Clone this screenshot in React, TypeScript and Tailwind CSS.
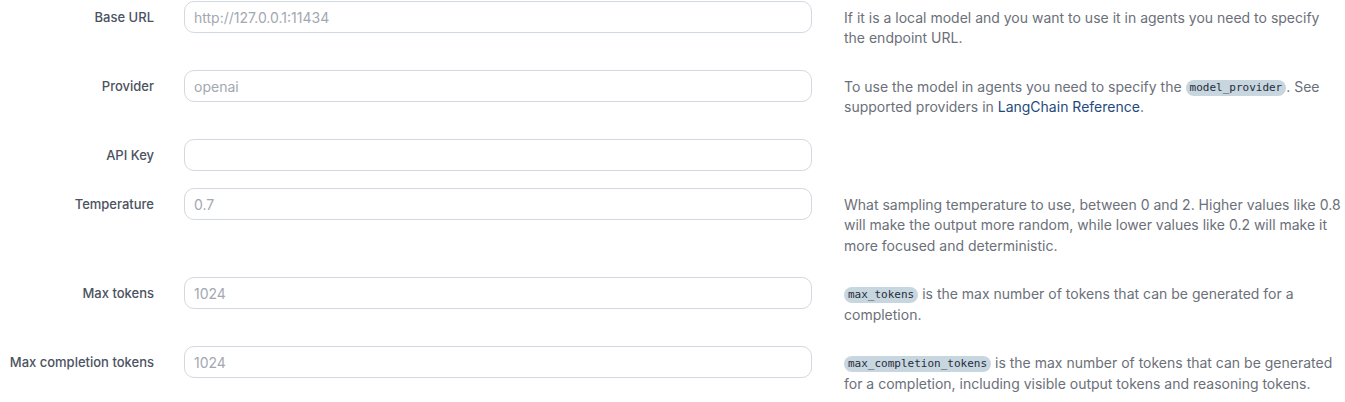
import React from "react";

type Field = {
  label: string;
  placeholder: string;
  help?: React.ReactNode;
};

function Code({ children }: { children: React.ReactNode }) {
  return (
    <code className="inline-block rounded-full bg-[#c8d6e0] px-[4px] leading-[16px] text-[11px] text-[#1f2d3a] [font-family:'DejaVu_Sans_Mono',monospace] align-[1px]">
      {children}
    </code>
  );
}

const fields: Field[] = [
  {
    label: "Base URL",
    placeholder: "http://127.0.0.1:11434",
    help: (
      <>If it is a local model and you want to use it in agents you need to specify the endpoint URL.</>
    ),
  },
  {
    label: "Provider",
    placeholder: "openai",
    help: (
      <>
        To use the model in agents you need to specify the <Code>model_provider</Code>. See supported providers in{" "}
        <a href="#" className="text-[#1e4a7c]">LangChain Reference</a>.
      </>
    ),
  },
  { label: "API Key", placeholder: "" },
  {
    label: "Temperature",
    placeholder: "0.7",
    help: (
      <>
        What sampling temperature to use, between 0 and 2. Higher values like 0.8 will make the output more random,
        while lower values like 0.2 will make it more focused and deterministic.
      </>
    ),
  },
  {
    label: "Max tokens",
    placeholder: "1024",
    help: (
      <>
        <Code>max_tokens</Code> is the max number of tokens that can be generated for a completion.
      </>
    ),
  },
  {
    label: "Max completion tokens",
    placeholder: "1024",
    help: (
      <>
        <Code>max_completion_tokens</Code> is the max number of tokens that can be generated for a completion, including
        visible output tokens and reasoning tokens.
      </>
    ),
  },
];

export default function App() {
  return (
    <div className="min-h-screen bg-white pt-[1px] [font-family:Inter,'Noto_Sans',sans-serif]">
      {fields.map((f) => (
        <div key={f.label} className="flex items-start mb-[17px]">
          <label className="w-[154px] shrink-0 text-right text-[13px] font-medium text-[#4b5260] leading-[32px]">
            {f.label}
          </label>
          <input
            className="ml-[30px] w-[628px] h-[32px] shrink-0 rounded-[10px] border border-[#d3d9e0] bg-white px-[9px] text-[14px] text-[#374151] placeholder:text-[#a3a8b0] outline-none"
            placeholder={f.placeholder}
          />
          {f.help ? (
            <p className="ml-[32px] w-[498px] pt-[7px] pb-[4.5px] text-[14px] leading-[20.25px] text-[#6b7079]">
              {f.help}
            </p>
          ) : null}
        </div>
      ))}
    </div>
  );
}
